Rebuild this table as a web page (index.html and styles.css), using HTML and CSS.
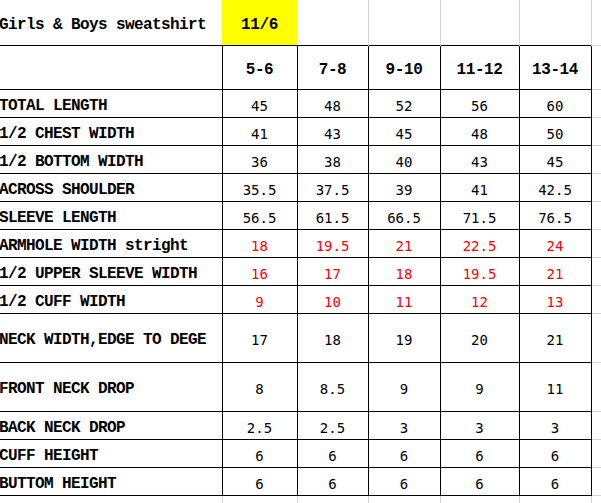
FILE: index.html
```html
<!DOCTYPE html>
<html>
<head>
<meta charset="utf-8">
<link rel="stylesheet" href="styles.css">
</head>
<body>
<table class="sheet">
  <colgroup>
    <col class="c-label"><col class="c1"><col class="c2"><col class="c3"><col class="c4"><col class="c5"><col class="c-pad">
  </colgroup>
  <tr class="r-title">
    <td class="title">Girls &amp; Boys sweatshirt</td>
    <td class="date">11/6</td>
    <td class="grid first"></td><td class="grid"></td><td class="grid"></td><td class="grid"></td>
    <td class="pad"></td>
  </tr>
  <tr class="r-head">
    <td class="lbl"></td>
    <td class="hd">5-6</td><td class="hd">7-8</td><td class="hd">9-10</td><td class="hd">11-12</td><td class="hd">13-14</td>
    <td class="pad"></td>
  </tr>
  <tr class="r-data">
    <td class="lbl">TOTAL LENGTH</td>
    <td class="num">45</td><td class="num">48</td><td class="num">52</td><td class="num">56</td><td class="num">60</td>
    <td class="pad"></td>
  </tr>
  <tr class="r-data">
    <td class="lbl">1/2 CHEST WIDTH</td>
    <td class="num">41</td><td class="num">43</td><td class="num">45</td><td class="num">48</td><td class="num">50</td>
    <td class="pad"></td>
  </tr>
  <tr class="r-data">
    <td class="lbl">1/2 BOTTOM WIDTH</td>
    <td class="num">36</td><td class="num">38</td><td class="num">40</td><td class="num">43</td><td class="num">45</td>
    <td class="pad"></td>
  </tr>
  <tr class="r-data">
    <td class="lbl">ACROSS SHOULDER</td>
    <td class="num">35.5</td><td class="num">37.5</td><td class="num">39</td><td class="num">41</td><td class="num">42.5</td>
    <td class="pad"></td>
  </tr>
  <tr class="r-data">
    <td class="lbl">SLEEVE LENGTH</td>
    <td class="num">56.5</td><td class="num">61.5</td><td class="num">66.5</td><td class="num">71.5</td><td class="num">76.5</td>
    <td class="pad"></td>
  </tr>
  <tr class="r-data red">
    <td class="lbl">ARMHOLE WIDTH stright</td>
    <td class="num">18</td><td class="num">19.5</td><td class="num">21</td><td class="num">22.5</td><td class="num">24</td>
    <td class="pad"></td>
  </tr>
  <tr class="r-data red">
    <td class="lbl">1/2 UPPER SLEEVE WIDTH</td>
    <td class="num">16</td><td class="num">17</td><td class="num">18</td><td class="num">19.5</td><td class="num">21</td>
    <td class="pad"></td>
  </tr>
  <tr class="r-data red">
    <td class="lbl">1/2 CUFF WIDTH</td>
    <td class="num">9</td><td class="num">10</td><td class="num">11</td><td class="num">12</td><td class="num">13</td>
    <td class="pad"></td>
  </tr>
  <tr class="r-tall">
    <td class="lbl">NECK WIDTH,EDGE TO DEGE</td>
    <td class="num">17</td><td class="num">18</td><td class="num">19</td><td class="num">20</td><td class="num">21</td>
    <td class="pad"></td>
  </tr>
  <tr class="r-tall">
    <td class="lbl">FRONT NECK DROP</td>
    <td class="num">8</td><td class="num">8.5</td><td class="num">9</td><td class="num">9</td><td class="num">11</td>
    <td class="pad"></td>
  </tr>
  <tr class="r-data">
    <td class="lbl">BACK NECK DROP</td>
    <td class="num">2.5</td><td class="num">2.5</td><td class="num">3</td><td class="num">3</td><td class="num">3</td>
    <td class="pad"></td>
  </tr>
  <tr class="r-data">
    <td class="lbl">CUFF HEIGHT</td>
    <td class="num">6</td><td class="num">6</td><td class="num">6</td><td class="num">6</td><td class="num">6</td>
    <td class="pad"></td>
  </tr>
  <tr class="r-data">
    <td class="lbl">BUTTOM HEIGHT</td>
    <td class="num">6</td><td class="num">6</td><td class="num">6</td><td class="num">6</td><td class="num">6</td>
    <td class="pad"></td>
  </tr>
  <tr class="r-tail">
    <td class="tail-lbl"></td>
    <td class="tail"></td><td class="tail"></td><td class="tail"></td><td class="tail"></td><td class="tail"></td>
    <td class="pad-tail"></td>
  </tr>
</table>
</body>
</html>
```

FILE: styles.css
```css
html, body {
  margin: 0;
  padding: 0;
  background: #fff;
  overflow: hidden;
}

.sheet {
  border-collapse: collapse;
  table-layout: fixed;
  width: 622px;
  margin-left: -1px;
  color: #000;
}

.c-label { width: 223px; }
.c1 { width: 75px; }
.c2 { width: 71px; }
.c3 { width: 72px; }
.c4 { width: 79px; }
.c5 { width: 72px; }
.c-pad { width: 30px; }

.sheet td {
  border: 1px solid #000;
  padding: 4px 0 0 0;
  white-space: nowrap;
  overflow: hidden;
  vertical-align: middle;
}

.r-title td { height: 41px; padding-top: 4px; }
.r-head td { height: 39px; }
.r-data td { height: 23px; }
.r-tall td { height: 44px; }
.r-tail td { height: 16px; }

.lbl, .title {
  font-family: "Liberation Mono", "DejaVu Sans Mono", monospace;
  font-weight: bold;
  font-size: 16px;
  letter-spacing: -0.6px;
  text-align: left;
  padding-left: 1px;
}

.sheet .lbl { border-left: none; }

.sheet .title {
  border: none;
}

.sheet .date {
  border: none;
  background: #ffff00;
  font-family: "Liberation Mono", "DejaVu Sans Mono", monospace;
  font-weight: bold;
  font-size: 16px;
  letter-spacing: -0.4px;
  text-align: center;
}

.sheet .grid {
  border-top: none;
  border-bottom: none;
  border-left: 1px solid #d4d4d4;
  border-right: 1px solid #d4d4d4;
}

.sheet .grid.first { border-left: none; }

.hd {
  font-family: "Liberation Mono", "DejaVu Sans Mono", monospace;
  font-weight: bold;
  font-size: 16px;
  letter-spacing: -0.4px;
  text-align: center;
}

.num {
  font-family: "DejaVu Sans Mono", "Liberation Mono", monospace;
  font-size: 14px;
  text-align: center;
}

.red .num { color: #ff0000; }

.sheet .pad {
  border-left: none;
  border-right: none;
  border-top: 1px solid #d4d4d4;
  border-bottom: 1px solid #d4d4d4;
}

.r-title .pad { border-top: none; }

.sheet .tail, .sheet .tail-lbl {
  border-top: none;
  border-bottom: none;
  border-left: 1px solid #d4d4d4;
  border-right: 1px solid #d4d4d4;
}

.sheet .tail-lbl { border-left: none; }

.sheet .pad-tail { border: none; }
```
